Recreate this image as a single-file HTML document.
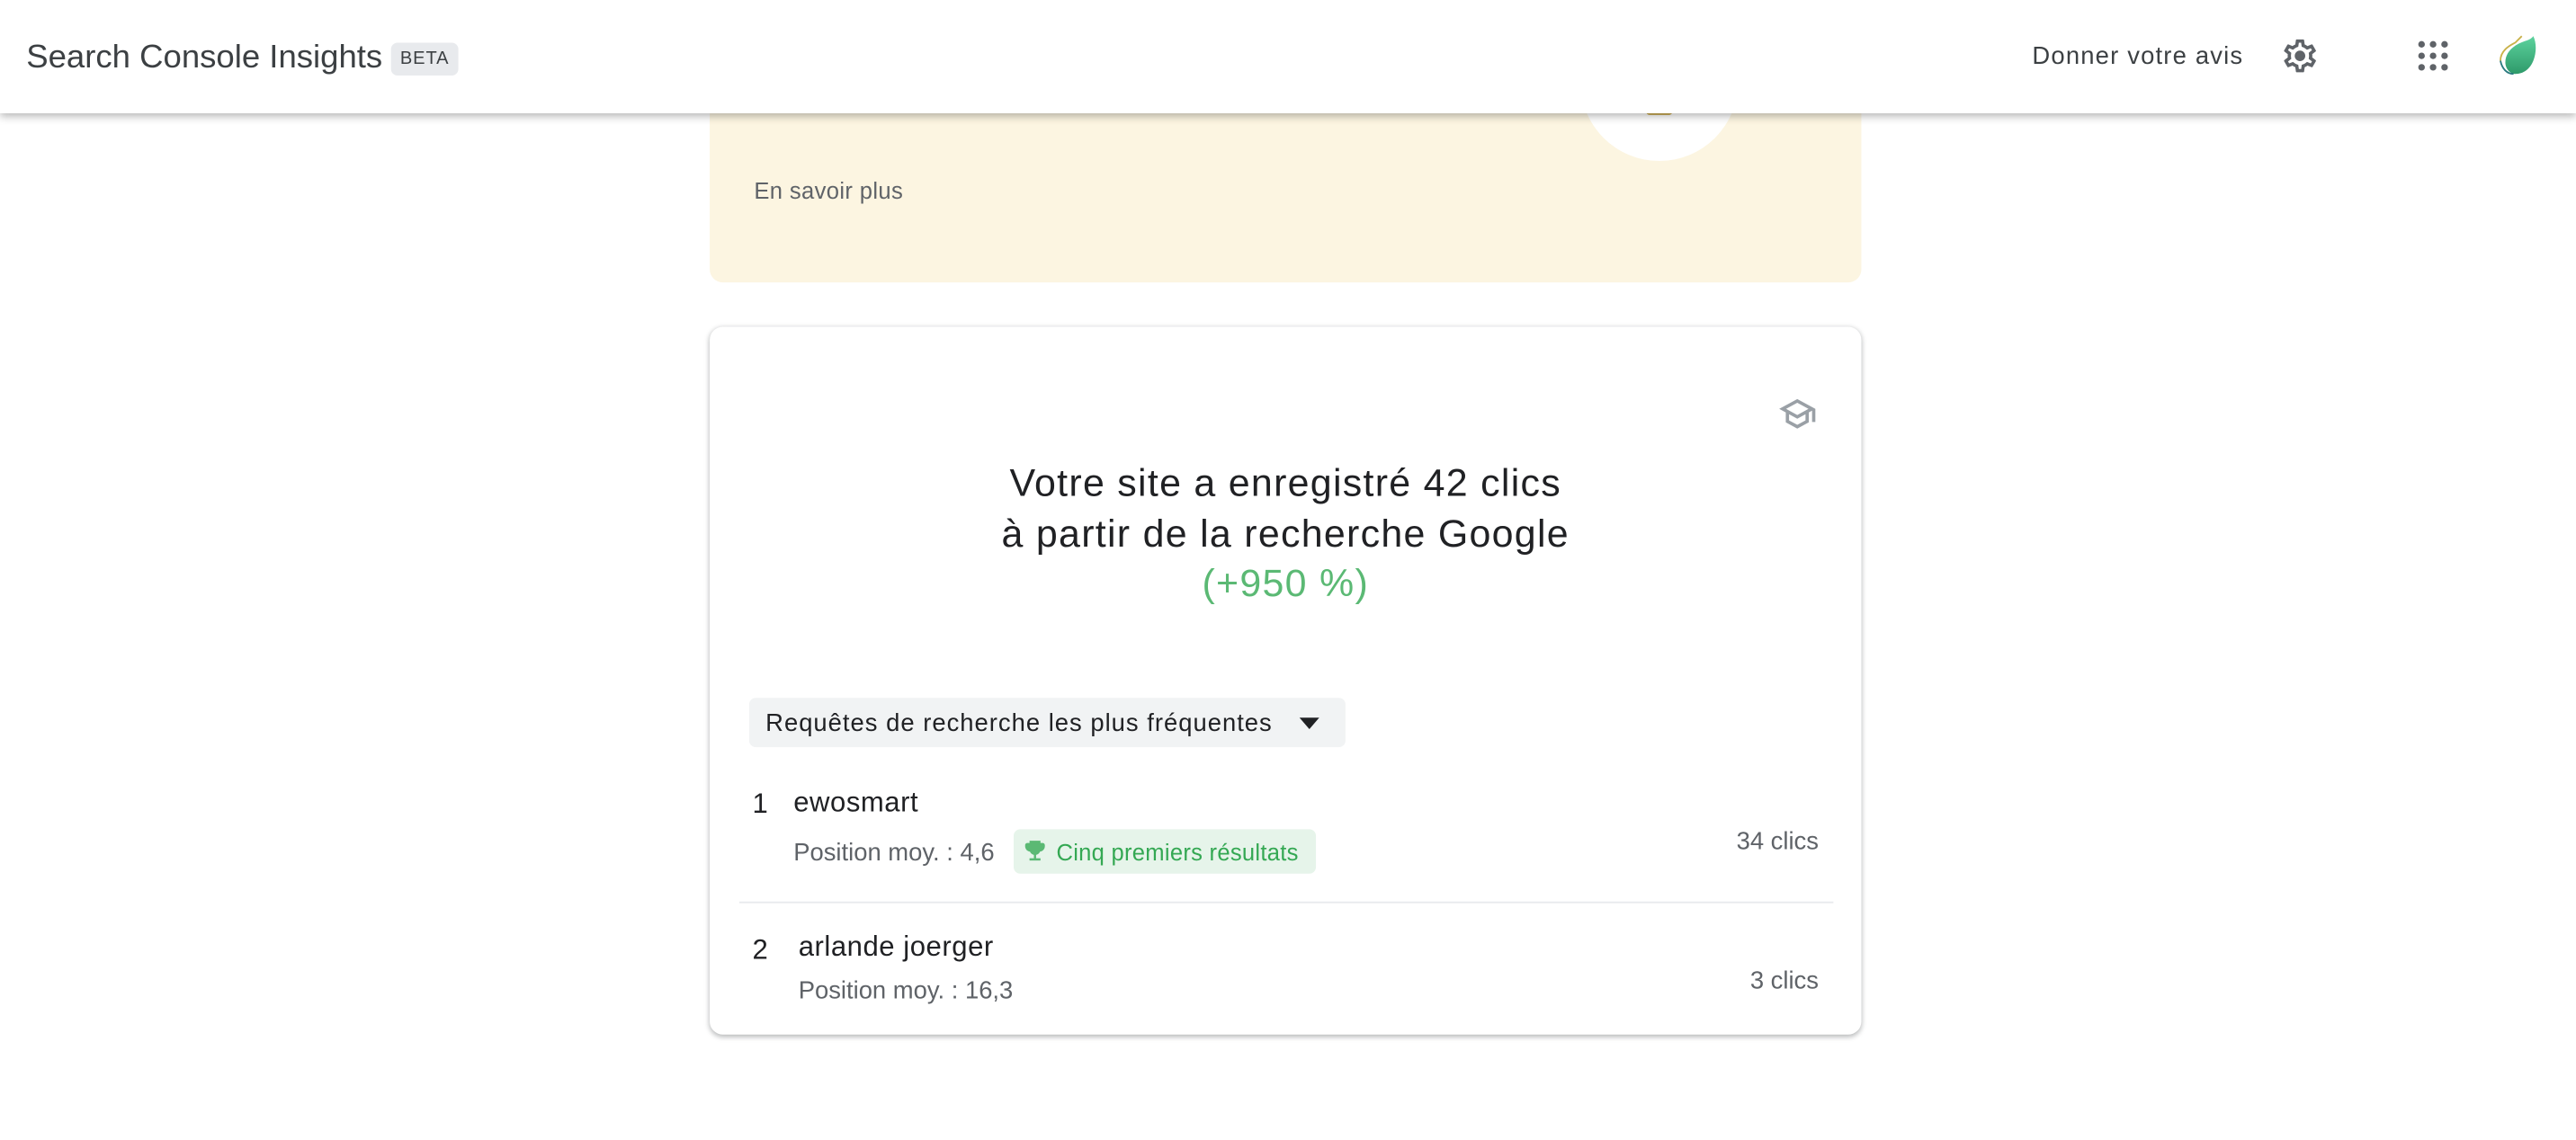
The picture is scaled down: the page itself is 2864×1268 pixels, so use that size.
<!DOCTYPE html>
<html><head><meta charset="utf-8"><style>
html,body{margin:0;padding:0;width:2864px;height:1268px;overflow:hidden;background:#fff;}
#s{position:absolute;left:0;top:0;width:1568px;height:694.2px;transform:scale(1.82653);transform-origin:0 0;font-family:"Liberation Sans",Arial,sans-serif;}
.a{position:absolute;white-space:nowrap;}
</style></head><body><div id="s">
<div class="a" style="left:432px;top:40px;width:701px;height:132px;background:#fcf5e1;border-radius:8px;"></div>
<div class="a" style="left:962px;top:2px;width:96px;height:96px;border-radius:50%;background:#fff;"></div>
<div class="a" style="left:1002px;top:62px;width:16px;height:8px;border-radius:2px;background:#c9a84a;"></div>
<div class="a" style="left:459px;top:108px;font-size:14px;color:#5f6368;letter-spacing:.2px;">En savoir plus</div>

<div class="a" style="left:0;top:0;width:1568px;height:69px;background:#fff;box-shadow:0 2px 5px rgba(0,0,0,.3);"></div>
<div class="a" style="left:16px;top:24px;font-size:20px;color:#3c4043;">Search Console Insights</div>
<div class="a" style="left:238px;top:26px;width:41px;height:20px;background:#e8eaed;border-radius:4px;font-size:11px;color:#3c4043;line-height:20px;text-align:center;letter-spacing:.5px;">BETA</div>
<div class="a" style="left:1237px;top:26px;font-size:15px;color:#3c4043;letter-spacing:.65px;">Donner votre avis</div>
<svg class="a" style="left:1388px;top:22px" width="24" height="24" viewBox="0 0 24 24"><path fill="#5f6368" d="M19.43 12.98c.04-.32.07-.64.07-.98 0-.34-.03-.66-.07-.98l2.11-1.65c.19-.15.24-.42.12-.64l-2-3.46a.5.5 0 0 0-.61-.22l-2.49 1c-.52-.4-1.08-.73-1.69-.98l-.38-2.65A.49.49 0 0 0 14 2h-4c-.25 0-.46.18-.49.42l-.38 2.65c-.61.25-1.17.59-1.69.98l-2.49-1a.5.5 0 0 0-.61.22l-2 3.46c-.13.22-.07.49.12.64l2.11 1.65c-.04.32-.07.65-.07.98s.03.66.07.98l-2.11 1.65c-.19.15-.24.42-.12.64l2 3.46c.12.22.39.3.61.22l2.49-1c.52.4 1.08.73 1.69.98l.38 2.65c.03.24.24.42.49.42h4c.25 0 .46-.18.49-.42l.38-2.65c.61-.25 1.17-.59 1.69-.98l2.49 1c.23.09.49 0 .61-.22l2-3.46c.12-.22.07-.49-.12-.64l-2.11-1.65zm-1.98-1.71c.04.31.05.52.05.73 0 .21-.02.43-.05.73l-.14 1.13.89.7 1.08.84-.7 1.21-1.27-.51-1.04-.42-.9.68c-.43.32-.84.56-1.25.73l-1.06.43-.16 1.13-.2 1.35h-1.4l-.19-1.35-.16-1.13-1.06-.43c-.43-.18-.83-.41-1.23-.71l-.91-.7-1.06.43-1.27.51-.7-1.21 1.08-.84.89-.7-.14-1.13c-.03-.31-.05-.54-.05-.74s.02-.43.05-.73l.14-1.13-.89-.7-1.08-.84.7-1.21 1.27.51 1.04.42.9-.68c.43-.32.84-.56 1.25-.73l1.06-.43.16-1.13.2-1.35h1.39l.19 1.35.16 1.13 1.06.43c.43.18.83.41 1.23.71l.91.7 1.06-.43 1.27-.51.7 1.21-1.07.85-.89.7.14 1.13z"/><circle cx="12" cy="12" r="3.2" fill="#5f6368"/></svg>
<svg class="a" style="left:1471px;top:24px" width="20" height="20" viewBox="0 0 20 20" fill="#5f6368"><circle cx="3" cy="3" r="2"/><circle cx="10" cy="3" r="2"/><circle cx="17" cy="3" r="2"/><circle cx="3" cy="10" r="2"/><circle cx="10" cy="10" r="2"/><circle cx="17" cy="10" r="2"/><circle cx="3" cy="17" r="2"/><circle cx="10" cy="17" r="2"/><circle cx="17" cy="17" r="2"/></svg>
<svg class="a" style="left:1521px;top:20px" width="26" height="28" viewBox="0 0 26 28"><defs><linearGradient id="g" x1="0" y1="0" x2="0" y2="1"><stop offset="0" stop-color="#5dd39e"/><stop offset="1" stop-color="#2e9a6a"/></linearGradient></defs><path d="M4 18c0-7 6-11 12-13 4-1 5-3 5-3 2 4 2 10 0 15-2 5-6 8-11 8-3 0-6-3-6-7z" fill="url(#g)"/><path d="M1 17c0-6 5-9 9-11l4-4" stroke="#c9b24a" fill="none" stroke-width="1"/><path d="M1 17c1 5 4 8 8 8" stroke="#2a7a80" fill="none" stroke-width="1"/></svg>

<div class="a" style="left:432px;top:199px;width:701px;height:431px;background:#fff;border-radius:8px;box-shadow:0 1px 3px rgba(60,64,67,.3),0 1px 4px rgba(60,64,67,.12);"></div>
<svg class="a" style="left:1082px;top:240px" width="24" height="24" viewBox="0 0 24 24"><path fill="#9aa0a6" d="M12 3L1 9l4 2.18v6L12 21l7-3.82v-6l2-1.09V17h2V9L12 3zm6.82 6L12 12.72 5.18 9 12 5.28 18.82 9zM17 15.99l-5 2.73-5-2.73v-3.72L12 15l5-2.73v3.72z"/></svg>
<div class="a" style="left:432px;width:701px;top:279px;text-align:center;font-size:23.5px;line-height:30.5px;color:#202124;letter-spacing:.7px;">Votre site a enregistré 42 clics<br>à partir de la recherche Google<br><span style="color:#5bb974;">(+950 %)</span></div>
<div class="a" style="left:456px;top:425px;width:363px;height:30px;background:#f1f3f4;border-radius:4px;"></div>
<div class="a" style="left:466px;top:432px;font-size:15px;color:#202124;letter-spacing:.55px;">Requêtes de recherche les plus fréquentes</div>
<div class="a" style="left:791px;top:437px;width:0;height:0;border-left:6px solid transparent;border-right:6px solid transparent;border-top:7px solid #202124;"></div>

<div class="a" style="left:458px;top:480px;font-size:17px;color:#202124;">1</div>
<div class="a" style="left:483px;top:479px;font-size:17px;color:#202124;letter-spacing:.3px;">ewosmart</div>
<div class="a" style="left:483px;top:511px;font-size:15px;color:#5f6368;">Position moy. : 4,6</div>
<div class="a" style="left:617px;top:505px;width:184px;height:27px;background:#e6f4ea;border-radius:4px;"></div>
<svg class="a" style="left:622px;top:510px" width="16" height="16" viewBox="0 0 24 24"><path fill="#5bb974" d="M19 5h-2V3H7v2H5c-1.1 0-2 .9-2 2v1c0 2.55 1.92 4.63 4.39 4.94A5.01 5.01 0 0 0 11 15.9V19H7v2h10v-2h-4v-3.1a5.01 5.01 0 0 0 3.61-2.96C19.08 12.63 21 10.55 21 8V7c0-1.1-.9-2-2-2z"/></svg>
<div class="a" style="left:643px;top:511px;font-size:14px;color:#34a853;letter-spacing:.15px;">Cinq premiers résultats</div>
<div class="a" style="right:461px;top:504px;font-size:15px;color:#5f6368;">34 clics</div>
<div class="a" style="left:450px;top:549px;width:666px;height:1px;background:#e8eaed;"></div>

<div class="a" style="left:458px;top:569px;font-size:17px;color:#202124;">2</div>
<div class="a" style="left:486px;top:567px;font-size:17px;color:#202124;letter-spacing:.3px;">arlande joerger</div>
<div class="a" style="left:486px;top:595px;font-size:15px;color:#5f6368;">Position moy. : 16,3</div>
<div class="a" style="right:461px;top:589px;font-size:15px;color:#5f6368;">3 clics</div>
</div></body></html>
